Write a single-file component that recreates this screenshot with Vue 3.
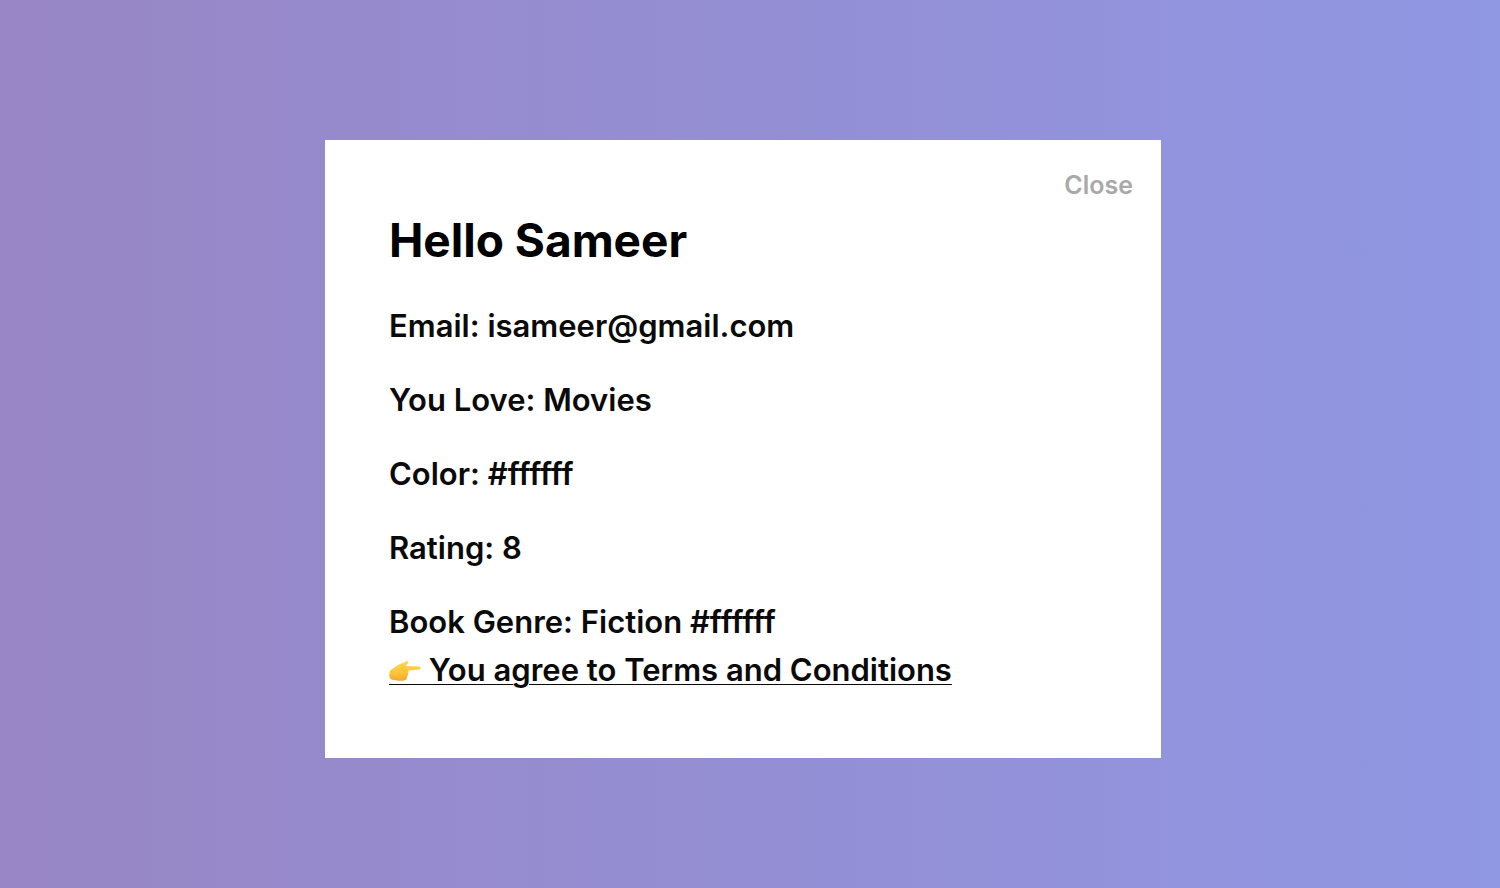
<script setup>
import { ref } from 'vue'

const open = ref(true)
const details = [
  { label: 'Email', value: 'isameer@gmail.com' },
  { label: 'You Love', value: 'Movies' },
  { label: 'Color', value: '#ffffff' },
  { label: 'Rating', value: '8' },
  { label: 'Book Genre', value: 'Fiction #ffffff' },
]
</script>

<template>
  <main class="page">
    <section v-if="open" class="modal" role="dialog" aria-labelledby="greeting">
      <header class="bar">
        <button type="button" class="close" @click="open = false">Close</button>
      </header>
      <div class="body">
        <h1 id="greeting">Hello Sameer</h1>
        <p v-for="d in details" :key="d.label">{{ d.label }}: {{ d.value }}</p>
        <div class="terms">
          <svg class="hand" viewBox="0 0 32 24" aria-hidden="true">
            <defs>
              <linearGradient id="skin" x1="0" y1="0" x2="0" y2="1">
                <stop offset="0" stop-color="#ffd552" />
                <stop offset="0.6" stop-color="#fec53a" />
                <stop offset="1" stop-color="#f2a62c" />
              </linearGradient>
            </defs>
            <path d="M0.6 12.4 C1 10.4 4 9.8 6 8.2 C8 6.2 11 5 14 4 C16 3.3 17 1.9 18.2 2 C19.8 2.2 19.5 4 18.4 5 L16.4 7 L30 7.4 C32.2 7.6 32.2 10.4 30 10.6 L19 11.8 C20 12.8 19.6 14.2 18.6 14.7 C19.4 15.9 18.9 17.4 17.7 17.8 C18.2 19.6 17.2 21.1 15.4 21.4 C12 21.9 8 21.8 5.5 21 C2 21.2 0.4 19.4 0.2 16.4 Z" fill="url(#skin)" />
            <path d="M16.4 7 C15 7.8 14 9 12.4 9.4 M19 11.8 L15 12 M18.6 14.7 L15 14.9 M17.7 17.8 L14.6 17.9" fill="none" stroke="#eda630" stroke-width="0.5" stroke-linecap="round" />
          </svg>
          <span>&nbsp;You agree to Terms and Conditions</span>
        </div>
      </div>
    </section>
  </main>
</template>

<style>
body {
  margin: 0;
}
</style>

<style scoped>
.page {
  box-sizing: border-box;
  min-height: 100vh;
  display: flex;
  align-items: center;
  justify-content: center;
  padding: 10px 14px 0 0;
  background: linear-gradient(90deg, #9886c5, #9097e3);
  font-family: Inter, "Liberation Sans", sans-serif;
  color: #000;
}
.modal {
  box-sizing: border-box;
  width: 836px;
  max-width: 100%;
  padding: 28px 28px 64px 64px;
  background: #fff;
}
.bar {
  display: flex;
  justify-content: flex-end;
}
.close {
  padding: 0;
  border: 0;
  background: none;
  font: 600 25px/34px Inter, "Liberation Sans", sans-serif;
  color: #a9a9a9;
  cursor: pointer;
}
h1 {
  margin: 10px 0 34px;
  font-size: 46px;
  line-height: 56px;
  font-weight: 700;
}
p,
.terms {
  margin: 0 0 26px;
  font-size: 31px;
  line-height: 48px;
  font-weight: 600;
  color: #0a0a0a;
}
p:last-of-type,
.terms {
  margin-bottom: 0;
}
.terms {
  text-decoration: underline;
  text-decoration-thickness: 1px;
  text-underline-offset: 3px;
}
.hand {
  width: 32px;
  height: 24px;
  padding-bottom: 1px;
  border-bottom: 1px solid #0a0a0a;
  vertical-align: -4px;
}
</style>
